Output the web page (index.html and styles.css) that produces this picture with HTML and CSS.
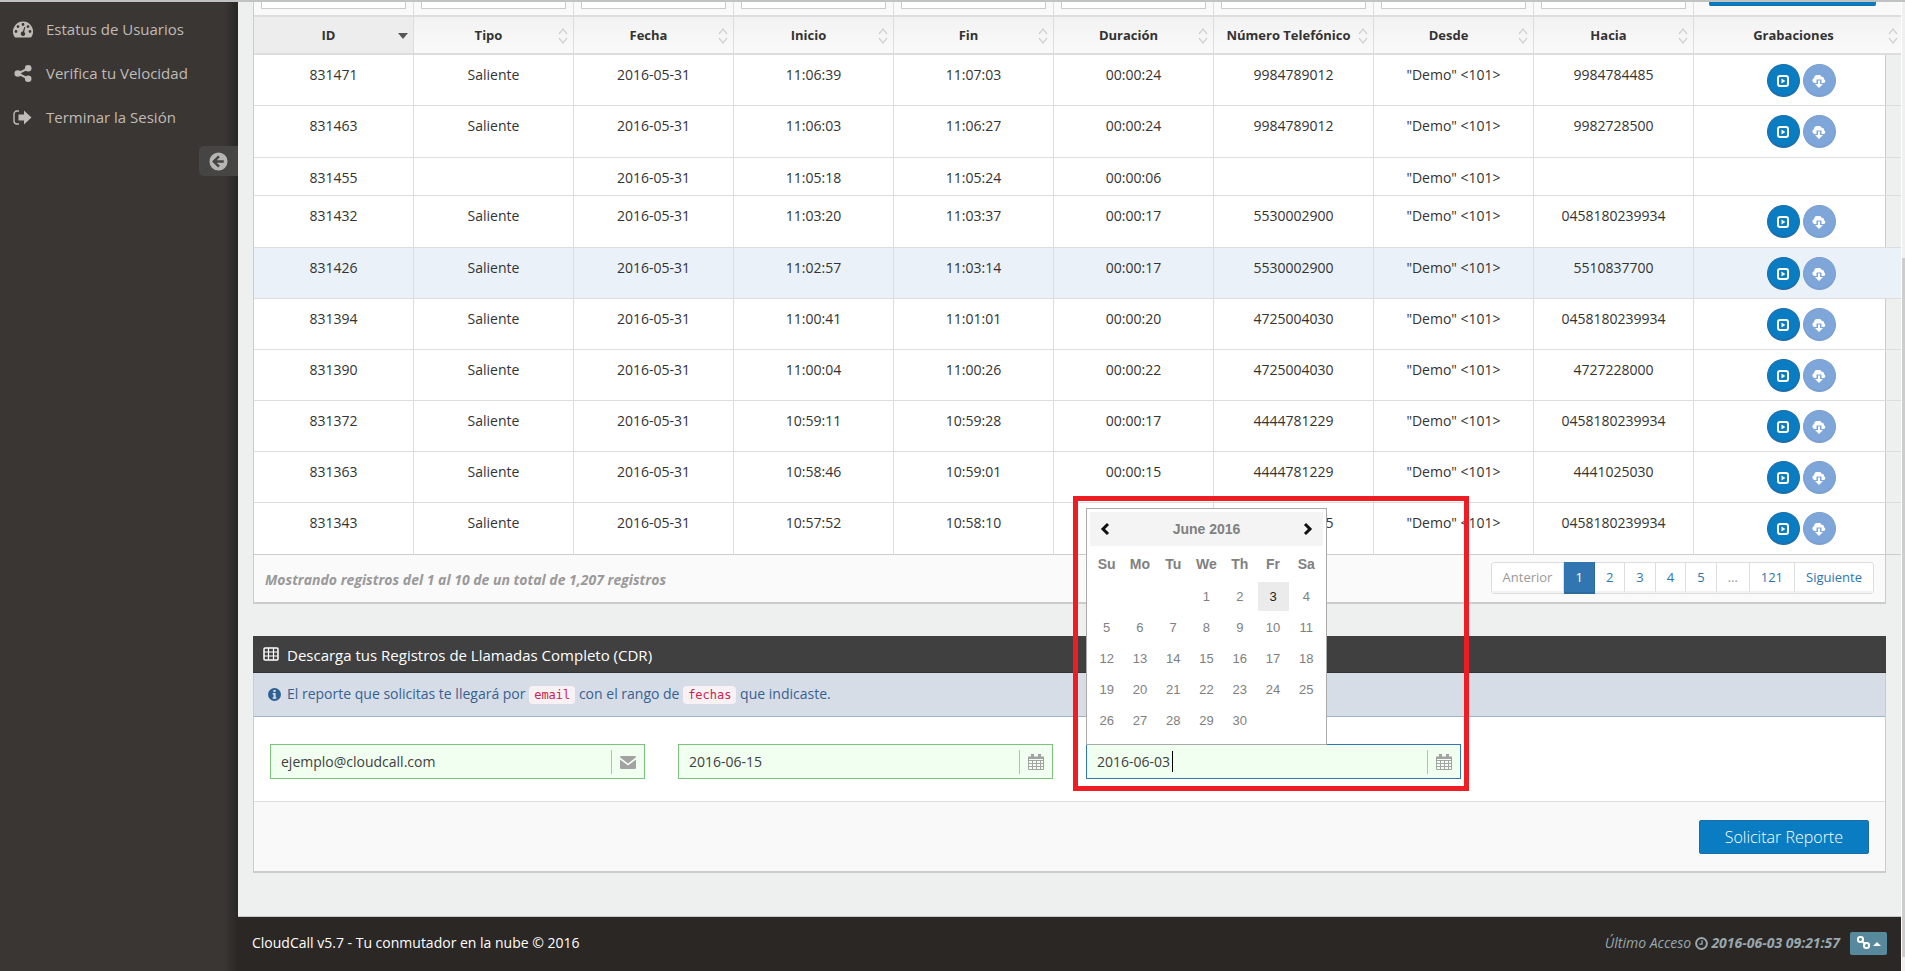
FILE: index.html
```html
<!DOCTYPE html>
<html lang="es">
<head>
<meta charset="utf-8">
<title>CloudCall - Registros de llamadas</title>
<link rel="stylesheet" href="styles.css">
</head>
<body>
<svg class="sprite" aria-hidden="true">
  <symbol id="i-play" viewBox="0 0 12 12"><rect x="1" y="1" width="10" height="10" rx="2" fill="none" stroke="currentColor" stroke-width="2"/><path d="M4.500 3.400v5.200L8.400 6z" fill="currentColor"/></symbol>
  <symbol id="i-cloud" viewBox="0 0 14 13"><path d="M2.500 8A2.500 2.500 0 0 1 2 3.200 4 4 0 0 1 9.600 1.800 2.200 2.200 0 0 1 12 4.200 2 2 0 0 1 11.800 8H9.500V4.500H4.500V8z" fill="currentColor"/><path d="M6 5.500h2V9h3l-4 4-4-4h3z" fill="currentColor"/></symbol>
  <symbol id="i-cal" viewBox="0 0 16 16"><path d="M.5 3.500h15v12H.5zM1 6.500h14M1 9.500h14M1 12.500h14M4.500 6v9M8.500 6v9M12.500 6v9" fill="none" stroke="currentColor"/><path d="M0 2.500h16V5H0zM3 0h3v4H3zM10 0h3v4h-3z" fill="currentColor"/></symbol>
  <symbol id="i-sort" viewBox="0 0 10 16"><path d="M1 6l4-5 4 5M1 10l4 5 4-5" fill="none" stroke="currentColor" stroke-width="1.300"/></symbol>
</svg>
<div class="app">
  <nav class="sidebar">
    <ul class="menu">
      <li><a href="#"><svg viewBox="0 0 20 16"><path fill-rule="evenodd" fill="currentColor" d="M10 0A10 10 0 0 0 1.500 15.300Q1.700 16 2.500 16h15q.800 0 1-.700A10 10 0 0 0 10 0zM10 1.600a1.400 1.400 0 1 1 0 2.800 1.400 1.400 0 0 1 0-2.800zM5 3.700a1.400 1.400 0 1 1 0 2.800 1.400 1.400 0 0 1 0-2.800zM15 3.700a1.400 1.400 0 1 1 0 2.800 1.400 1.400 0 0 1 0-2.800zM3 8.600a1.400 1.400 0 1 1 0 2.800 1.400 1.400 0 0 1 0-2.800zM17 8.600a1.400 1.400 0 1 1 0 2.800 1.400 1.400 0 0 1 0-2.800zM11.300 5.500l1 .300-1.200 4.600a2.200 2.200 0 1 1-1.200-.300z"/></svg><span>Estatus de Usuarios</span></a></li>
      <li><a href="#"><svg viewBox="0 0 18 18"><g fill="currentColor"><circle cx="14.500" cy="3.500" r="3.500"/><circle cx="3.500" cy="9" r="3.500"/><circle cx="14.500" cy="14.500" r="3.500"/></g><path d="M14.500 3.500L3.500 9l11 5.500" fill="none" stroke="currentColor" stroke-width="2.200"/></svg><span>Verifica tu Velocidad</span></a></li>
      <li><a href="#"><svg viewBox="0 0 20 16"><path d="M6 1.500H4a3 3 0 0 0-3 3v7a3 3 0 0 0 3 3h2" fill="none" stroke="currentColor" stroke-width="1.400"/><path d="M5.500 5H11V1l7.500 7L11 15v-4H5.500z" fill="currentColor"/></svg><span>Terminar la Sesión</span></a></li>
    </ul>
    <button class="collapse" type="button" aria-label="Contraer menú"><svg viewBox="0 0 20 20"><circle cx="10" cy="10" r="9.500" fill="#b5b5b5"/><path d="M10.500 4.500L5 10l5.500 5.500M5.500 10h10" fill="none" stroke="#474544" stroke-width="2.600"/></svg></button>
  </nav>
  <div class="page">
    <main class="content">
      <section class="panel list">
        <table class="calls">
          <colgroup><col><col><col><col><col><col><col><col><col><col class="last"></colgroup>
          <thead>
            <tr class="filters" id="filters"></tr>
            <tr class="heads" id="heads"></tr>
          </thead>
          <tbody id="rows"></tbody>
        </table>
        <div class="listfoot">
          <em>Mostrando registros del 1 al 10 de un total de 1,207 registros</em>
          <ul class="pages">
            <li class="off"><span>Anterior</span></li><li class="on"><a href="#">1</a></li><li><a href="#">2</a></li><li><a href="#">3</a></li><li><a href="#">4</a></li><li><a href="#">5</a></li><li class="off"><span>…</span></li><li><a href="#">121</a></li><li><a href="#">Siguiente</a></li>
          </ul>
        </div>
      </section>

      <form class="panel report">
        <h2><svg viewBox="0 0 16 14"><rect x="1" y="1" width="14" height="12" rx="1" fill="none" stroke="#fff" stroke-width="1.500"/><path d="M1 5h14M1 9h14M5.500 1v12M10.500 1v12" stroke="#fff" stroke-width="1.200"/></svg>Descarga tus Registros de Llamadas Completo (CDR)</h2>
        <p class="info"><svg viewBox="0 0 14 14"><circle cx="7" cy="7" r="7" fill="#2e6093"/><path d="M5.800 2.200h2.400v2H5.800zM5 5.500h3.200v4.500H9v1.500H5V10h1V7H5z" fill="#d6dde7"/></svg>El reporte que solicitas te llegará por <code>email</code> con el rango de <code>fechas</code> que indicaste.</p>
        <div class="fields">
          <label class="field"><input type="text" value="ejemplo@cloudcall.com" aria-label="Email"><svg viewBox="0 0 16 14"><path d="M0 2.200Q0 1 1.200 1h13.600Q16 1 16 2.200L8 8.500z M0 4.500l8 6 8-6v8.300q0 1.200-1.200 1.200H1.200Q0 14 0 12.800z" fill="currentColor"/></svg></label>
          <label class="field"><input type="text" value="2016-06-15" aria-label="Fecha inicial"><svg><use href="#i-cal"/></svg></label>
          <div class="picker">
            <label class="field focus"><input type="text" value="2016-06-03" aria-label="Fecha final"><i class="caret"></i><svg><use href="#i-cal"/></svg></label>
            <div class="calendar">
              <div class="calhead"><button type="button" aria-label="Anterior"><svg viewBox="0 0 10 14"><path d="M8 2L3 7l5 5" fill="none" stroke="#111" stroke-width="3"/></svg></button><strong>June 2016</strong><button type="button" aria-label="Siguiente"><svg viewBox="0 0 10 14"><path d="M2 2l5 5-5 5" fill="none" stroke="#111" stroke-width="3"/></svg></button></div>
              <table>
                <thead><tr><th>Su</th><th>Mo</th><th>Tu</th><th>We</th><th>Th</th><th>Fr</th><th>Sa</th></tr></thead>
                <tbody>
                  <tr><td></td><td></td><td></td><td>1</td><td>2</td><td class="today"><span>3</span></td><td>4</td></tr>
                  <tr><td>5</td><td>6</td><td>7</td><td>8</td><td>9</td><td>10</td><td>11</td></tr>
                  <tr><td>12</td><td>13</td><td>14</td><td>15</td><td>16</td><td>17</td><td>18</td></tr>
                  <tr><td>19</td><td>20</td><td>21</td><td>22</td><td>23</td><td>24</td><td>25</td></tr>
                  <tr><td>26</td><td>27</td><td>28</td><td>29</td><td>30</td><td></td><td></td></tr>
                </tbody>
              </table>
            </div>
            <div class="highlight"></div>
          </div>
        </div>
        <div class="actions"><button class="submit" type="button">Solicitar Reporte</button></div>
      </form>
    </main>
    <footer class="foot">
      <span>CloudCall v5.7 - Tu conmutador en la nube © 2016</span>
      <div class="access">
        <em>Último Acceso <svg viewBox="0 0 12 12"><circle cx="6" cy="6" r="5" fill="none" stroke="currentColor" stroke-width="1.800"/><path d="M6.500 3v3.500H4" fill="none" stroke="currentColor" stroke-width="1.200"/></svg> <b>2016-06-03 09:21:57</b></em>
        <button class="links" type="button" aria-label="Enlaces"><svg viewBox="0 0 24 13"><g fill="none" stroke="#fff" stroke-width="2"><rect x="1" y="1" width="5" height="5" rx="2.200"/><rect x="7" y="7" width="5" height="5" rx="2.200"/><path d="M4.500 4.500l4 4"/></g><path d="M16 10l4-4 4 4z" fill="#fff"/></svg></button>
      </div>
    </footer>
  </div>
  <div class="scroll"><div class="thumb"></div></div>
</div>
<script src="app.js"></script>
</body>
</html>
```
FILE: app.js
```javascript
const heads = ["ID", "Tipo", "Fecha", "Inicio", "Fin", "Duración", "Número Telefónico", "Desde", "Hacia", "Grabaciones"];
const calls = [
  ["831471", "Saliente", "11:06:39", "11:07:03", "00:00:24", "9984789012", "9984784485"],
  ["831463", "Saliente", "11:06:03", "11:06:27", "00:00:24", "9984789012", "9982728500"],
  ["831455", "", "11:05:18", "11:05:24", "00:00:06", "", ""],
  ["831432", "Saliente", "11:03:20", "11:03:37", "00:00:17", "5530002900", "0458180239934"],
  ["831426", "Saliente", "11:02:57", "11:03:14", "00:00:17", "5530002900", "5510837700"],
  ["831394", "Saliente", "11:00:41", "11:01:01", "00:00:20", "4725004030", "0458180239934"],
  ["831390", "Saliente", "11:00:04", "11:00:26", "00:00:22", "4725004030", "4727228000"],
  ["831372", "Saliente", "10:59:11", "10:59:28", "00:00:17", "4444781229", "0458180239934"],
  ["831363", "Saliente", "10:58:46", "10:59:01", "00:00:15", "4444781229", "4441025030"],
  ["831343", "Saliente", "10:57:52", "10:58:10", "00:00:18", "4444781225", "0458180239934"]
];
document.getElementById("filters").innerHTML = heads.map((h, i) =>
  i < 9 ? `<td><input type="text" aria-label="Filtrar ${h}"></td>` : `<td><button type="button" aria-label="Buscar"></button></td>`).join("");
document.getElementById("heads").innerHTML = heads.map((h, i) =>
  `<th class="${i ? "" : "sorted"}">${h}${i ? '<svg><use href="#i-sort"/></svg>' : ""}</th>`).join("");
document.getElementById("rows").innerHTML = calls.map((c, i) => {
  const cells = [c[0], c[1], "2016-05-31", c[2], c[3], c[4], c[5], "\"Demo\" &lt;101&gt;", c[6]];
  const tools = c[6] ? `<div class="tools"><button class="play" type="button" aria-label="Reproducir"><svg><use href="#i-play"/></svg></button><button class="down" type="button" aria-label="Descargar"><svg><use href="#i-cloud"/></svg></button></div>` : "";
  return `<tr class="${i === 4 ? "hover" : ""}">${cells.map(t => `<td>${t}</td>`).join("")}<td>${tools}</td></tr>`;
}).join("");
```
FILE: styles.css
```css
* { box-sizing: border-box; }
body { margin: 0; font: 14px/20px "Open Sans", sans-serif; color: #333; background: #eeefef; overflow: hidden; }
button, input { font: inherit; }
ul { list-style: none; margin: 0; padding: 0; }
a { color: inherit; text-decoration: none; }
.sprite { display: none; }
.app { display: flex; min-height: 100vh; border-top: 2px solid #bfc4c2; }

.sidebar { width: 238px; flex: none; background: linear-gradient(to left, #2a2725, #3a3633 14px); color: #c0bbb7; }
.menu { padding-top: 5px; }
.menu a { display: flex; align-items: center; gap: 13px; height: 44px; padding-left: 13px; font-size: 15px; }
.menu svg { width: 20px; height: 17px; }
.collapse { display: flex; align-items: center; width: 39px; height: 30px; margin: 7px 0 0 auto; padding: 0 0 0 10px; border: 0; border-radius: 5px 0 0 5px; background: #474544; }
.collapse svg { width: 19px; height: 19px; }

.page { flex: 1; min-width: 0; display: flex; flex-direction: column; overflow: hidden; }
.content { flex: 1; padding: 0 15px; }
.panel { border: 1px solid #ccc; border-bottom-width: 2px; background: #fff; }
.list { border-top: 0; margin-bottom: 32px; }
.calls { width: calc(100% + 18px); table-layout: fixed; border-collapse: separate; border-spacing: 0; }
.calls .last { width: 209px; }
.calls td, .calls th { border-right: 1px solid #ddd; border-bottom: 1px solid #ddd; padding: 0; text-align: center; vertical-align: top; }
.calls td:last-child, .calls th:last-child { border-right: 0; }
.calls .filters td { height: 15px; padding: 0 7px; border-bottom-width: 2px; background: #f9f9f9; }
.filters input { display: block; width: 100%; height: 7px; border: 1px solid #ccc; border-top: 0; background: #fff; }
.filters button { display: block; width: 167px; height: 4px; margin-left: 8px; padding: 0; border: 0; border-bottom: 1px solid #1a6aa8; border-radius: 0 0 2px 2px; background: #0a7cc1; }
.calls th { position: relative; height: 38px; padding: 8px 10px 0 0; border-bottom-width: 2px; font-size: 13px; line-height: 20px; white-space: nowrap; background: linear-gradient(#f2f2f2, #fafafa); }
.calls th.sorted { background: #ededed; }
.calls th svg { position: absolute; right: 5px; top: 11px; width: 10px; height: 16px; color: #d2d2d2; }
.calls th.sorted::after { content: ""; position: absolute; right: 5px; top: 16px; border: 5px solid transparent; border-top: 6px solid #555; border-bottom: 0; }
.calls tbody td { height: 51px; padding-top: 10px; }
.calls tbody tr:nth-child(2) td, .calls tbody tr:nth-child(4) td, .calls tbody tr:last-child td { height: 52px; }
.calls tbody tr:nth-child(3) td { height: 38px; }
.calls tbody tr:last-child td { border-bottom-color: #ccc; }
.calls tbody td:last-child { padding: 9px 0 0 5px; background: linear-gradient(to right, #fff 191px, #ccc 191px, #ccc 192px, #eeefef 192px); }
.calls .hover td, .calls .hover td:last-child { background: #eaf1f8; }
.tools { display: flex; gap: 3px; justify-content: center; }
.tools button { display: flex; align-items: center; justify-content: center; width: 33px; height: 33px; padding: 2px 0 0; border: 1px solid #1d6cab; border-bottom-width: 2px; border-radius: 50%; background: #0a7cc1; color: #fff; }
.tools .down { border-color: #7a9fd2; background: #7fa6d8; }
.tools svg { flex: none; width: 12px; height: 12px; }
.tools .down svg { width: 14px; height: 13px; }
.listfoot { display: flex; justify-content: space-between; align-items: flex-start; height: 47px; padding: 7px 11px 0; background: #fafafa; }
.listfoot em { padding-top: 8px; font-weight: 700; color: #999; }
.pages { display: flex; border: 1px solid #ddd; border-radius: 3px; background: #fff; font-size: 13px; color: #2f74b2; }
.pages li { height: 30px; padding: 4px 11px; border-right: 1px solid #ddd; border-bottom: 2px solid #f2f2f2; }
.pages li:last-child { border-right: 0; }
.pages .off { color: #999; }
.pages .on { margin: -1px 0; height: 32px; padding-top: 5px; background: #3276b1; border-color: #2c699d; color: #fff; }

.report { border-top: 0; }
.report h2 { display: flex; align-items: center; gap: 8px; height: 37px; margin: 0 -1px; padding: 2px 10px 0; background: #404040; border-bottom: 1px solid #333; color: #fff; font-size: 15px; font-weight: 400; }
.report h2 svg { width: 16px; height: 14px; margin-bottom: 3px; }
.info { height: 44px; margin: 0; padding: 11px 14px; background: #d6dde7; border-bottom: 1px solid #9cb4c5; color: #376192; }
.info svg { width: 13px; height: 13px; margin-right: 6px; vertical-align: -2px; }
code { padding: 2px 5px; border-radius: 4px; background: #f9f2f4; color: #c7254e; font: 12px/20px "DejaVu Sans Mono", monospace; }
.fields { display: grid; grid-template-columns: repeat(4, 1fr); gap: 33px; padding: 27px 16px 22px; border-bottom: 1px solid #ddd; }
.field { display: flex; align-items: center; height: 35px; padding: 0 8px 0 10px; border: 1px solid #7dc27d; background: #f0fff0; }
.field input { flex: 1; min-width: 0; padding: 0; border: 0; outline: 0; background: transparent; color: #404040; }
.field svg { flex: none; width: 25px; height: 24px; padding: 4px 0 4px 8px; border-left: 1px solid #bbb; color: #a2a2a2; }
.focus { border-color: #3276b1; position: relative; }
.picker { position: relative; }
.caret { position: absolute; left: 85px; top: 6px; width: 1px; height: 21px; background: #000; }
.calendar { position: absolute; left: 0; bottom: 34px; width: 241px; height: 237px; padding: 3px; border: 1px solid #aaa; background: #fff; color: #808080; font: 13px/18px "Liberation Sans", Arial, sans-serif; }
.calhead { display: flex; align-items: center; justify-content: space-between; height: 34px; padding: 0 10px; background: #f4f4f4; }
.calhead strong { font-size: 14px; }
.calhead button { width: 10px; height: 14px; padding: 0; border: 0; background: none; }
.calhead svg { display: block; width: 10px; height: 14px; }
.calendar table { width: 100%; table-layout: fixed; border-collapse: collapse; }
.calendar th { height: 35px; padding: 0; font-size: 14px; }
.calendar td { height: 31px; padding: 0; text-align: center; }
.calendar .today { color: #222; }
.today span { display: block; width: 31px; margin: 0 auto; line-height: 29px; background: #ebebeb; }
.highlight { position: absolute; left: -13px; right: -8px; top: -248px; bottom: -12px; border: 5px solid #ee1c23; pointer-events: none; }
.actions { display: flex; justify-content: flex-end; padding: 18px 16px 17px; background: #f9f9f9; }
.submit { height: 34px; padding: 0 25px; border: 1px solid #1f6ba8; border-radius: 2px; background: #0a7cc1; color: #fff; font-size: 16px; font-weight: 300; }

.foot { display: flex; align-items: center; justify-content: space-between; height: 55px; padding: 0 14px 2px; border-top: 1px solid #c4cac8; background: #2a2725; color: #fff; }
.access { display: flex; align-items: center; gap: 10px; color: #99a7ae; }
.access em svg { width: 13px; height: 13px; vertical-align: -2px; }
.links { width: 37px; height: 23px; padding: 0 6px; border: 1px solid #568a9f; border-bottom-width: 2px; border-radius: 2px; background: #57889c; }
.links svg { display: block; width: 24px; height: 13px; }
.scroll { width: 4px; flex: none; border-left: 1px solid #fff; background: #f0f0f0; padding-top: 256px; }
.thumb { height: 699px; background: #cdcdcd; }
```
